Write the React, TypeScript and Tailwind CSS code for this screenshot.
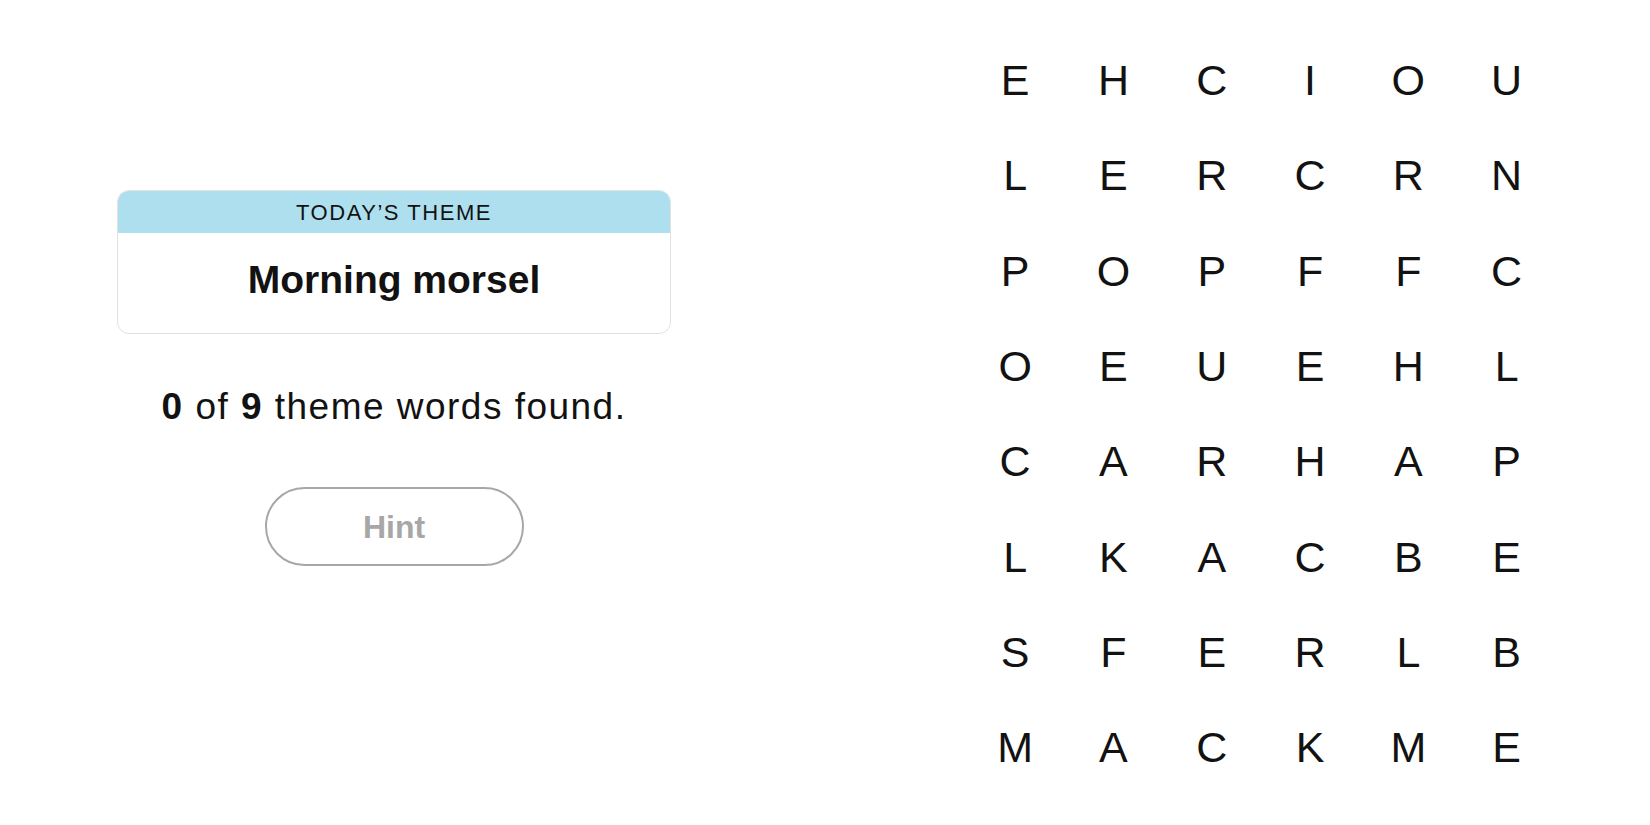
const GRID = [
  ['E', 'H', 'C', 'I', 'O', 'U'],
  ['L', 'E', 'R', 'C', 'R', 'N'],
  ['P', 'O', 'P', 'F', 'F', 'C'],
  ['O', 'E', 'U', 'E', 'H', 'L'],
  ['C', 'A', 'R', 'H', 'A', 'P'],
  ['L', 'K', 'A', 'C', 'B', 'E'],
  ['S', 'F', 'E', 'R', 'L', 'B'],
  ['M', 'A', 'C', 'K', 'M', 'E'],
];

function ThemeCard() {
  return (
    <div className="w-[554px] rounded-[12px] border border-[#e2e2e2] overflow-hidden bg-white">
      <div className="h-[42px] bg-[#aedfee] flex items-center justify-center">
        <span className="text-[22px] tracking-[0.07em] text-[#121212] uppercase">Today’s Theme</span>
      </div>
      <div className="h-[100px] flex items-center justify-center pb-[6px]">
        <span className="text-[39px] font-bold text-[#121212]">Morning morsel</span>
      </div>
    </div>
  );
}

export default function App() {
  return (
    <div className="w-[1650px] h-[825px] bg-white flex font-['Liberation_Sans',Arial,sans-serif] text-[#121212]">
      <div className="w-[788px] flex flex-col items-center pt-[190px]">
        <ThemeCard />
        <p className="mt-[52px] text-[37px] leading-[42px] tracking-[0.04em]">
          <span className="font-bold">0</span> of <span className="font-bold">9</span> theme words found.
        </p>
        <button className="mt-[59px] w-[259px] h-[79px] rounded-full border-2 border-[#a7a7a7] text-[32px] font-bold text-[#a7a7a7]">
          Hint
        </button>
      </div>
      <div className="flex-1 pl-[178px] pt-[33px]">
        <div className="grid grid-cols-[repeat(6,98.3px)] auto-rows-[95.3px]">
          {GRID.flatMap((row, r) =>
            row.map((ch, c) => (
              <div key={`${r}-${c}`} className="flex items-center justify-center text-[43px] leading-none">
                {ch}
              </div>
            ))
          )}
        </div>
      </div>
    </div>
  );
}
